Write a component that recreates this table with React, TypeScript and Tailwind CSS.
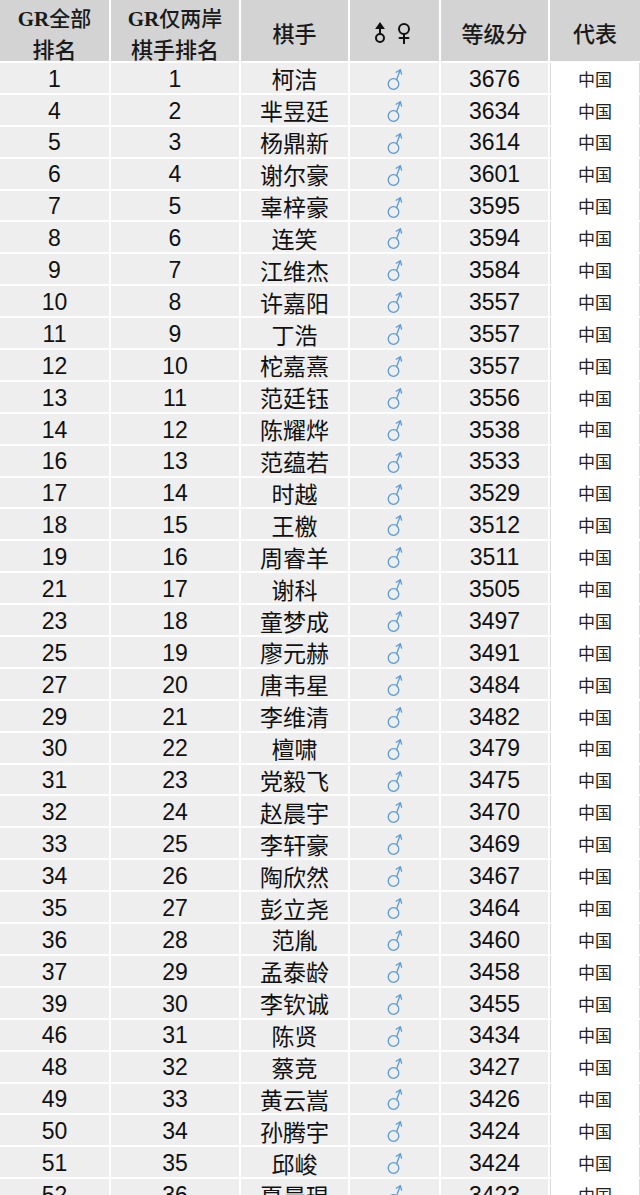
import React from "react";

const rows: [number, number, string, number][] = [
  [1, 1, "柯洁", 3676],
  [4, 2, "芈昱廷", 3634],
  [5, 3, "杨鼎新", 3614],
  [6, 4, "谢尔豪", 3601],
  [7, 5, "辜梓豪", 3595],
  [8, 6, "连笑", 3594],
  [9, 7, "江维杰", 3584],
  [10, 8, "许嘉阳", 3557],
  [11, 9, "丁浩", 3557],
  [12, 10, "柁嘉熹", 3557],
  [13, 11, "范廷钰", 3556],
  [14, 12, "陈耀烨", 3538],
  [16, 13, "范蕴若", 3533],
  [17, 14, "时越", 3529],
  [18, 15, "王檄", 3512],
  [19, 16, "周睿羊", 3511],
  [21, 17, "谢科", 3505],
  [23, 18, "童梦成", 3497],
  [25, 19, "廖元赫", 3491],
  [27, 20, "唐韦星", 3484],
  [29, 21, "李维清", 3482],
  [30, 22, "檀啸", 3479],
  [31, 23, "党毅飞", 3475],
  [32, 24, "赵晨宇", 3470],
  [33, 25, "李轩豪", 3469],
  [34, 26, "陶欣然", 3467],
  [35, 27, "彭立尧", 3464],
  [36, 28, "范胤", 3460],
  [37, 29, "孟泰龄", 3458],
  [39, 30, "李钦诚", 3455],
  [46, 31, "陈贤", 3434],
  [48, 32, "蔡竞", 3427],
  [49, 33, "黄云嵩", 3426],
  [50, 34, "孙腾宇", 3424],
  [51, 35, "邱峻", 3424],
  [52, 36, "夏晨琨", 3423],
];

function Male() {
  return (
    <svg width="16" height="24" viewBox="0 0 16 24" fill="none" stroke="#5b9bd5" strokeWidth="1.3" strokeLinecap="round" strokeLinejoin="round">
      <circle cx="6.5" cy="17" r="5.3" />
      <path d="M9.6 12.7 L13.2 3" />
      <path d="M9.2 5.2 L13.3 2.7 L14.6 7.2" />
    </svg>
  );
}

function HeaderSymbols() {
  return (
    <svg width="42" height="22" viewBox="0 0 42 22" fill="none" stroke="#111" strokeWidth="2" strokeLinecap="round">
      <circle cx="6" cy="16" r="4" />
      <path d="M6 12 L6 3" />
      <path d="M3 6 L6 1.8 L9 6 Z" fill="#111" />
      <circle cx="30" cy="7" r="5" />
      <path d="M30 12 L30 21.5" />
      <path d="M25.5 16 L34.5 16" />
    </svg>
  );
}

export default function App() {
  return (
    <div className="w-[640px] h-[1195px] overflow-hidden bg-white">
      <div className="grid grid-cols-[109px_128px_107px_89px_107px_90px] gap-[2px]">
        <div className="bg-[#d3d3d3] h-[61px] flex flex-col items-center justify-center text-[#1a1a1a] pt-[4px] font-['Noto_Sans_CJK_SC',sans-serif]">
          <div className="text-[21px] leading-[29px] font-medium">
            <span className="font-bold font-['Liberation_Serif',serif]">GR</span>全部
          </div>
          <div className="text-[22px] leading-[29px] font-medium">排名</div>
        </div>
        <div className="bg-[#d3d3d3] h-[61px] flex flex-col items-center justify-center text-[#1a1a1a] pt-[4px] font-['Noto_Sans_CJK_SC',sans-serif]">
          <div className="text-[21px] leading-[29px] font-medium">
            <span className="font-bold font-['Liberation_Serif',serif]">GR</span>仅两岸
          </div>
          <div className="text-[22px] leading-[29px] font-medium">棋手排名</div>
        </div>
        <div className="bg-[#d3d3d3] h-[61px] flex items-center justify-center text-[#1a1a1a] pt-[4px] text-[22px] font-medium font-['Noto_Sans_CJK_SC',sans-serif]">
          棋手
        </div>
        <div className="bg-[#d3d3d3] h-[61px] flex items-center justify-center pt-[4px]">
          <HeaderSymbols />
        </div>
        <div className="bg-[#d3d3d3] h-[61px] flex items-center justify-center text-[#1a1a1a] pt-[4px] text-[22px] font-medium font-['Noto_Sans_CJK_SC',sans-serif]">
          等级分
        </div>
        <div className="bg-[#d3d3d3] h-[61px] flex items-center justify-center text-[#1a1a1a] pt-[4px] text-[22px] font-medium font-['Noto_Sans_CJK_SC',sans-serif]">
          代表
        </div>

        {rows.map(([a, b, name, score]) => (
          <React.Fragment key={a}>
            <div className="bg-[#eeeeee] h-[29.9px] flex items-center justify-center text-[#111] text-[23px] pt-[2px] font-['Liberation_Sans',Arial,sans-serif]">
              {a}
            </div>
            <div className="bg-[#eeeeee] h-[29.9px] flex items-center justify-center text-[#111] text-[23px] pt-[2px] font-['Liberation_Sans',Arial,sans-serif]">
              {b}
            </div>
            <div className="bg-[#eeeeee] h-[29.9px] flex items-center justify-center text-[#111] text-[23px] pt-[2px] font-['Noto_Sans_CJK_SC',sans-serif]">
              <span className="leading-none">{name}</span>
            </div>
            <div className="bg-[#eeeeee] h-[29.9px] flex items-center justify-center pt-[2px]">
              <Male />
            </div>
            <div className="bg-[#eeeeee] h-[29.9px] flex items-center justify-center text-[#111] text-[23px] pt-[2px] font-['Liberation_Sans',Arial,sans-serif]">
              {score}
            </div>
            <div className="bg-white h-[29.9px] flex items-center justify-center text-[17px] text-[#222] border-x border-[#d9d9d9] pt-[1px] font-['Noto_Sans_CJK_SC',sans-serif]">
              中国
            </div>
          </React.Fragment>
        ))}
      </div>
    </div>
  );
}
